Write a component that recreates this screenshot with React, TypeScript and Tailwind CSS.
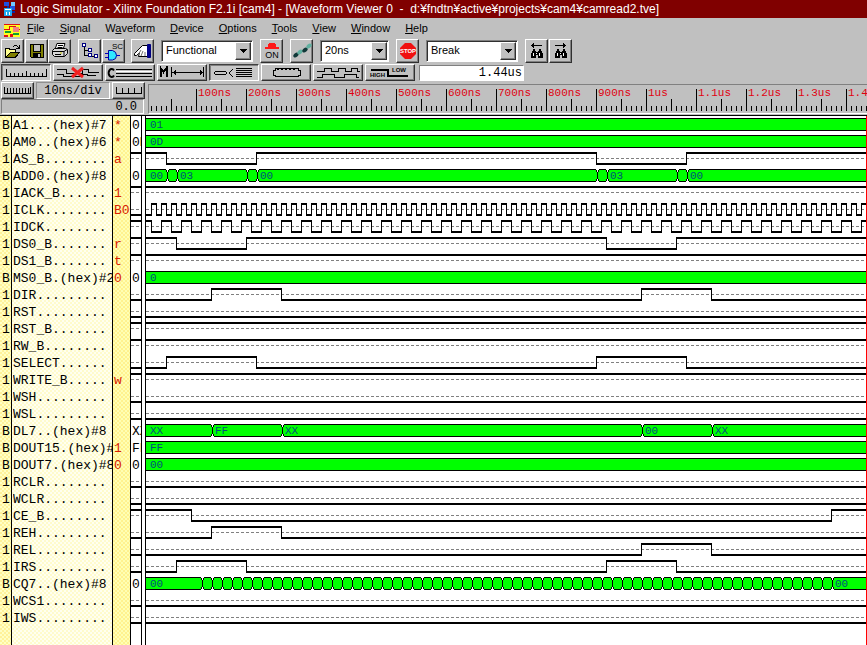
import React from "react";

type Signal = {
  name: string;
  tag?: string;
  value?: string;
  // digital line: starting level and the times (ns) at which it toggles
  high?: boolean;
  edges?: number[];
  // bus: labelled segments, plus unlabelled boundaries
  bus?: { at: number; text: string }[];
  cuts?: number[];
};

const every = (from: number, step: number, to: number) => {
  const out: number[] = [];
  for (let t = from; t <= to; t += step) out.push(t);
  return out;
};

const END = 6000;
const SIMULATED = 1440;

const SIGNALS: Signal[] = [
  { name: "A1...(hex)#7", tag: "*", value: "0", bus: [{ at: 0, text: "01" }] },
  { name: "AM0..(hex)#6", tag: "*", value: "0D", bus: [{ at: 0, text: "0D" }] },
  { name: "AS_B........", tag: "a", high: true, edges: [40, 220, 900, 1080] },
  {
    name: "ADD0.(hex)#8",
    value: "0",
    bus: [
      { at: 0, text: "00" },
      { at: 60, text: "03" },
      { at: 220, text: "00" },
      { at: 920, text: "03" },
      { at: 1080, text: "00" },
    ],
    cuts: [40, 60, 200, 220, 900, 920, 1060, 1080],
  },
  { name: "IACK_B......", tag: "1", high: true },
  { name: "ICLK........", tag: "B0", edges: every(10, 10, END) },
  { name: "IDCK........", high: true, edges: every(10, 20, END) },
  { name: "DS0_B.......", tag: "r", high: true, edges: [60, 200, 920, 1060] },
  { name: "DS1_B.......", tag: "t", high: true },
  { name: "MS0_B.(hex)#2", tag: "0", value: "0", bus: [{ at: 0, text: "0" }] },
  { name: "DIR.........", edges: [130, 270, 990, 1130] },
  { name: "RST........." },
  { name: "RST_B.......", high: true },
  { name: "RW_B........", high: true },
  { name: "SELECT......", edges: [40, 220, 900, 1080] },
  { name: "WRITE_B.....", tag: "w", high: true },
  { name: "WSH........." },
  { name: "WSL........." },
  {
    name: "DL7..(hex)#8",
    value: "XX",
    bus: [
      { at: 0, text: "XX" },
      { at: 130, text: "FF" },
      { at: 270, text: "XX" },
      { at: 990, text: "00" },
      { at: 1130, text: "XX" },
    ],
    cuts: [130, 270, 990, 1130],
  },
  { name: "DOUT15.(hex)#1", tag: "1", value: "FF", bus: [{ at: 0, text: "FF" }] },
  { name: "DOUT7.(hex)#8", tag: "0", value: "0", bus: [{ at: 0, text: "00" }] },
  { name: "RCLR........" },
  { name: "WCLR........" },
  { name: "CE_B........", high: true, edges: [90, 1370] },
  { name: "REH.........", edges: [130, 270] },
  { name: "REL.........", edges: [990, 1130] },
  { name: "IRS.........", edges: [60, 200, 920, 1060] },
  {
    name: "CQ7..(hex)#8",
    value: "0",
    bus: [
      { at: 0, text: "00" },
      { at: 1370, text: "00" },
    ],
    cuts: every(110, 20, 1370),
  },
  { name: "WCS1........" },
  { name: "IWS........." },
];

const px = (ns: number) => ns / 2;

function Wave({ s }: { s: Signal }) {
  if (s.bus) {
    return (
      <svg className="block h-[17px] w-full" shapeRendering="crispEdges" role="img" aria-label={s.name}>
        <rect x="0" y="2" width="100%" height="13" fill="#000" />
        <rect x="0" y="3" width="100%" height="11" fill="#00ff00" />
        {(s.cuts ?? []).map((t) => (
          <g key={t} transform={`translate(${px(t) + 1} 2)`}>
            <rect x="-1" y="0" width="3" height="1" fill="#fff" />
            <rect x="-1" y="12" width="3" height="1" fill="#fff" />
            <path d="M0 1h1v2h-1zM0 10h1v2h-1z" fill="#fff" />
            <path d="M-1 1h1v2h-1zM1 1h1v2h-1zM0 3h1v7h-1zM-1 10h1v2h-1zM1 10h1v2h-1z" fill="#000" />
          </g>
        ))}
        {s.bus.map((b) => (
          <text key={b.at} x={px(b.at) + 4} y="12" className="fill-[#00507c] font-['Liberation_Mono',monospace] text-[11px]">
            {b.text}
          </text>
        ))}
      </svg>
    );
  }
  const edges = s.edges ?? [];
  const points = [0, ...edges.map(px), px(END)];
  return (
    <svg className="block h-[17px] w-full" shapeRendering="crispEdges" role="img" aria-label={s.name}>
      <line x1="0" x2="100%" y1="8.5" y2="8.5" stroke="#808080" strokeDasharray="3 2" />
      {points.slice(0, -1).map((x, i) => {
        const up = i % 2 === 0 ? s.high : !s.high;
        return (
          <g key={x}>
            <rect x={x} y={up ? 2 : 13} width={points[i + 1] - x + 1} height="2" />
            {i > 0 && <rect x={x} y="2" width="1" height="13" />}
          </g>
        );
      })}
    </svg>
  );
}

const raised =
  "flex items-center justify-center border border-t-white border-l-white border-r-[#303030] border-b-[#303030] bg-[#c0c0c0] shadow-[inset_-1px_-1px_0_#808080]";
const pressed =
  "flex items-center justify-center border border-t-[#404040] border-l-[#404040] border-r-white border-b-white bg-[#c8c8c8] shadow-[inset_1px_1px_0_#808080]";

function Tool({ label, children }: { label: string; children: React.ReactNode }) {
  return (
    <button aria-label={label} className={`${raised} h-6 w-[23px] shrink-0`}>
      {children}
    </button>
  );
}

function Wide({ label, on, children }: { label: string; on?: boolean; children: React.ReactNode }) {
  return (
    <button aria-label={label} aria-pressed={!!on} className={`${on ? pressed : raised} h-[17px] w-[50px] shrink-0`}>
      <svg width="46" height="13" viewBox="0 0 46 13" fill="none" stroke="#000" shapeRendering="crispEdges">
        {children}
      </svg>
    </button>
  );
}

function Combo({ label, value, options, width }: { label: string; value: string; options: string[]; width: string }) {
  return (
    <div
      className={`relative h-[22px] shrink-0 border border-t-[#808080] border-l-[#808080] border-r-white border-b-white bg-white shadow-[inset_1px_1px_0_#303030] ${width}`}
    >
      <select aria-label={label} defaultValue={value} className="h-full w-full appearance-none bg-transparent pl-1 text-[11px] outline-none">
        {options.map((o) => (
          <option key={o}>{o}</option>
        ))}
      </select>
      <span className={`${raised} pointer-events-none absolute top-px right-px bottom-px w-4`}>
        <svg width="7" height="4" shapeRendering="crispEdges">
          <path d="M0 0h7v1h-7zM1 1h5v1h-5zM2 2h3v1h-3zM3 3h1v1h-1z" />
        </svg>
      </span>
    </div>
  );
}

const MENUS: [string, string, string][] = [
  ["", "F", "ile"],
  ["", "S", "ignal"],
  ["W", "a", "veform"],
  ["", "D", "evice"],
  ["", "O", "ptions"],
  ["", "T", "ools"],
  ["", "V", "iew"],
  ["", "W", "indow"],
  ["", "H", "elp"],
];

function Binoculars({ back }: { back?: boolean }) {
  return (
    <svg width="17" height="18" viewBox="0 0 17 18" shapeRendering="crispEdges">
      <path d={back ? "M3 3h11v1h-11zM4 2h1v3h-1zM5 1h1v5h-1z" : "M3 3h11v1h-11zM12 2h1v3h-1zM11 1h1v5h-1z"} />
      <path d="M5 7h2v2h1v1h2v-1h1v-2h2v2h1v2h1v5h-5v-3h-2v3h-5v-5h1v-2h1z" />
      <path d="M5 11h1v3h-1zM11 11h1v3h-1zM8 11h1v1h-1z" fill="#fff" />
    </svg>
  );
}

function Ruler() {
  return (
    <svg className="block h-[29px] w-full" shapeRendering="crispEdges" role="img" aria-label="Time scale">
      {every(10, 10, END).map((t) => {
        const h = t % 100 === 0 ? 22 : t % 50 === 0 ? 12 : 5;
        return <rect key={t} x={px(t) - 3} y={26 - h} width="1" height={h} />;
      })}
      {every(100, 100, SIMULATED).map((t) => (
        <text key={t} x={px(t) - 1} y="11" className="fill-[#e00010] font-['Liberation_Mono',monospace] text-[11px]">
          {t < 1000 ? `${t}ns` : `${t / 1000}us`}
        </text>
      ))}
    </svg>
  );
}

export default function App() {
  return (
    <div className="flex h-screen flex-col overflow-hidden bg-[#c0c0c0] font-['Liberation_Sans',Arial,sans-serif] text-[11px] text-black">
      <header className="flex h-[18px] shrink-0 items-center gap-[3px] bg-[#800000] pl-[2px] text-[12px] whitespace-pre text-white">
        <svg width="15" height="16" viewBox="0 0 15 16" shapeRendering="crispEdges" aria-hidden="true">
          <path d="M2 1h5v4h-5zM8 5h5v4h-5z" fill="#2050e0" />
          <path d="M9 1h4v4h-4z" fill="#70c8ff" />
          <path d="M2 7h8v8h-8z" fill="#20a8f0" />
          <path d="M3 8h6v1h-6zM4 11h1v3h-1zM7 11h1v3h-1z" fill="#fff" />
          <path d="M5 5h2v2h-2zM10 10h3v2h-3z" fill="#1028a0" />
        </svg>
        <h1>Logic Simulator - Xilinx Foundation F2.1i [cam4] - [Waveform Viewer 0{"  "}-{"  "}d:¥fndtn¥active¥projects¥cam4¥camread2.tve]</h1>
      </header>

      <nav className="flex h-5 shrink-0 items-center gap-[15px] pl-1">
        <svg width="16" height="13" viewBox="0 0 16 13" shapeRendering="crispEdges" className="-mr-2 mt-1" aria-hidden="true">
          <path d="M0 0h16v13h-16z" fill="#ffff20" />
          <path d="M0 0h16v1h-16zM0 5h5v1h-5zM5 2h1v4h-1zM6 2h5v1h-5zM11 2h1v4h-1zM12 5h4v1h-4z" fill="#e01010" />
          <path d="M9 3h6v5h-6z" fill="#f08080" />
          <path d="M1 7h6v2h-6zM9 9h6v2h-6z" fill="#10a030" />
          <path d="M0 11h4v2h-4zM6 10h3v3h-3z" fill="#e01010" />
        </svg>
        {MENUS.map(([a, b, c]) => (
          <button key={a + b + c}>
            {a}
            <span className="underline">{b}</span>
            {c}
          </button>
        ))}
      </nav>

      <div className="flex h-[25px] shrink-0 items-center pl-px">
        <Tool label="Open">
          <svg width="17" height="16" viewBox="0 0 17 16" shapeRendering="crispEdges">
            <path d="M1 5h4l1 1h6v3h4l-4 6h-11z" fill="#000" />
            <path d="M2 6h3v1h6v2h-5l-4 5z" fill="#ffff90" />
            <path d="M6 10h8l-3 4h-8z" fill="#808000" />
            <path d="M9 3h1v-1h3v1h1v1h1v-2h1v4h-4v-1h2v-1h-1v-1h-3v1h-1z" />
          </svg>
        </Tool>
        <div className="w-px" />
        <Tool label="Save">
          <svg width="16" height="16" viewBox="0 0 16 16" shapeRendering="crispEdges">
            <path d="M1 1h14v14h-13l-1-1z" />
            <path d="M2 2h2v7h8v-7h2v12h-2v-4h-8v4h-2z" fill="#808000" />
            <path d="M5 2h6v6h-6zM9 11h2v3h-2z" fill="#c0c0c0" />
          </svg>
        </Tool>
        <Tool label="Print">
          <svg width="18" height="17" viewBox="0 0 18 17" stroke="#000">
            <path d="M6 1.5h8l-2 6h-8z" fill="#fff" />
            <path d="M7 3.5h5M6.500 5.500h5" />
            <path d="M1.500 8.500l2-2h11l2 1v4l-3 3h-10l-2-2z" fill="#d8d8d8" />
            <path d="M2 9.500h11l3-2M13 9.500v5M4 12.500h6" fill="none" />
            <path d="M9 11h2" stroke="#c8c800" />
          </svg>
        </Tool>
        <div className="w-[7px]" />
        <Tool label="Hierarchy">
          <svg width="17" height="17" viewBox="0 0 17 17" fill="none" shapeRendering="crispEdges">
            <path d="M3.500 4v9.500h7M3.500 8.500h4M9.500 11v3.500h4" stroke="#000" />
            <path d="M1.500 1.500h3v3h-3zM7.500 6.500h3v3h-3zM7.500 11.500h3v3h-3zM13.500 12.500h3v3h-3z" fill="#fff" stroke="#000080" />
          </svg>
        </Tool>
        <div className="w-px" />
        <Tool label="Schematic">
          <svg width="20" height="20" viewBox="0 0 20 20">
            <text x="8" y="8" fontSize="8" className="font-['Liberation_Sans',sans-serif]">
              SC
            </text>
            <path d="M1 12.500h4M1 16.500h4M12 14.500h4" stroke="#0000c0" />
            <path d="M4.500 9.500h4q4 1 4 5t-4 4.500h-4z" fill="#30e8ff" stroke="#0000a0" />
          </svg>
        </Tool>
        <div className="w-[6px]" />
        <Tool label="Select signals">
          <svg width="19" height="16" viewBox="0 0 19 16" stroke="#000">
            <path d="M14.500 2.500h-5l-8 8v2h2l3-3 -1 4h9z" fill="#fff" />
            <path d="M8 7l-3 5M10 8l-2 5M12 9v4" fill="none" stroke="#707070" />
            <path d="M14.500 1.500h3v13h-3z" fill="#000090" stroke="#000080" />
          </svg>
        </Tool>
        <div className="w-[7px]" />
        <Combo label="Simulation mode" value="Functional" options={["Functional", "Glitch", "Unit", "Timing"]} width="w-[92px]" />
        <div className="w-[7px]" />
        <Tool label="Power on">
          <svg width="18" height="18" viewBox="0 0 18 18">
            <path d="M6 1h6v1h1v3h3v2h-14v-2h3v-3h1z" fill="#ff1818" shapeRendering="crispEdges" />
            <text x="9" y="16" textAnchor="middle" fontSize="9" className="font-['Liberation_Sans',sans-serif]">
              ON
            </text>
          </svg>
        </Tool>
        <div className="w-[7px]" />
        <Tool label="Step">
          <svg width="20" height="18" viewBox="0 0 20 18">
            <ellipse cx="4" cy="13" rx="3" ry="2" transform="rotate(-40 4 13)" fill="#103838" />
            <ellipse cx="8" cy="10" rx="3" ry="2" transform="rotate(-40 8 10)" fill="#60b0a0" />
            <ellipse cx="13" cy="8" rx="3" ry="2" transform="rotate(-40 13 8)" fill="#103838" />
            <ellipse cx="17" cy="4" rx="3" ry="2" transform="rotate(-40 17 4)" fill="#60b0a0" />
          </svg>
        </Tool>
        <div className="w-[7px]" />
        <Combo label="Step size" value="20ns" options={["10ns", "20ns", "100ns"]} width="w-[69px]" />
        <div className="w-[7px]" />
        <Tool label="Stop">
          <svg width="18" height="18" viewBox="0 0 18 18">
            <path d="M6 1h6l5 5v6l-5 5h-6l-5-5v-6z" fill="#f01010" />
            <text x="9" y="11" textAnchor="middle" fontSize="6" fontWeight="bold" fill="#fff" className="font-['Liberation_Sans',sans-serif]">
              STOP
            </text>
          </svg>
        </Tool>
        <div className="w-[7px]" />
        <Combo label="Breakpoint" value="Break" options={["Break", "Continue"]} width="w-[92px]" />
        <div className="w-[7px]" />
        <Tool label="Find previous">
          <Binoculars back />
        </Tool>
        <div className="w-px" />
        <Tool label="Find next">
          <Binoculars />
        </Tool>
      </div>

      <div className="flex h-[19px] shrink-0 items-center gap-[2px] pl-px">
        <Wide label="Ruler" on>
          <path d="M3.500 3v7.500h40v-7.500M7.500 10v-3M11.500 10v-3M15.500 10v-3M19.500 10v-3M23.500 10v-5M27.500 10v-3M31.500 10v-3M35.500 10v-3M39.500 10v-3" />
        </Wide>
        <Wide label="Delete waveform">
          <path d="M2 3.500h9v4h16v-4h6v3h11M2 8.500h6v2h18v-2h7M32 9.500h9" />
          <path d="M17 2l11 9M28 2l-11 9" stroke="#f02020" strokeWidth="3" shapeRendering="auto" />
        </Wide>
        <Wide label="Comment">
          <path d="M7 4.500a3 4 0 1 0 0 5" strokeWidth="2" shapeRendering="auto" />
          <path d="M9 3.500h36M9 7.500h36M9 10.500h36" />
          <path d="M9 5.500h36" stroke="#fff" />
        </Wide>
        <Wide label="Measure">
          <path d="M1.500 11v-9l3 4 3-4v9" strokeWidth="2" />
          <path d="M12.500 1v10M44.500 1v10M13 6.500h31M16 4v5M15 5v3M41 4v5M42 5v3" />
        </Wide>
        <Wide label="Collapse bus" on>
          <path d="M4 5.500h11M3.500 6v2M4 8.500h11M15.500 6v2" />
          <path d="M22 3l-4 4 4 4" shapeRendering="auto" />
          <path d="M25 2.500h16M25 4.500h16M25 6.500h16M25 8.500h16M25 10.500h16" />
        </Wide>
        <Wide label="Bus">
          <path d="M12.500 2.500h23v2h2v5h-2v1h-23v-1h-2v-5h2z" />
          <path d="M14 3.500h20M14 10.500h20" strokeDasharray="2 2" />
        </Wide>
        <Wide label="Clock waves">
          <path d="M2 5.500h7v-3h7v3h7v-3h7v3h6v-3h6v3h3M2 11.500h5v-3h12v3h10v-3h12v3h3" />
        </Wide>
        <Wide label="Low and high">
          <path d="M4 3.500h17v6h20" strokeWidth="2" />
          <text x="3" y="11" fontSize="6" fontWeight="bold" fill="#000" stroke="none" className="font-['Liberation_Sans',sans-serif]">
            HIGH
          </text>
          <text x="25" y="6" fontSize="6" fontWeight="bold" fill="#000" stroke="none" className="font-['Liberation_Sans',sans-serif]">
            LOW
          </text>
        </Wide>
        <input
          aria-label="Current time"
          defaultValue="1.44us"
          className="ml-[2px] h-4 w-[105px] border border-t-[#808080] border-l-[#808080] border-r-white border-b-white bg-white px-px text-right font-['Liberation_Mono',monospace] text-[12px]"
        />
      </div>

      <div className="flex h-[34px] shrink-0 border-b border-black">
        <div className="flex w-[146px] shrink-0 flex-col pb-px">
          <div className="flex h-[17px] justify-between gap-[2px] pr-px pl-px">
            <button aria-label="Zoom out" className={`${raised} w-[33px]`}>
              <svg width="27" height="8" fill="none" stroke="#000" shapeRendering="crispEdges">
                <path d="M.500 0v6.500h26v-6.500M3.500 1v5M6.500 1v5M9.500 1v5M12.500 1v5M15.500 1v5M18.500 1v5M21.500 1v5M24.500 1v5" />
              </svg>
            </button>
            <output className="flex flex-1 items-center justify-center border border-t-[#909090] border-l-[#909090] border-r-white border-b-white font-['Liberation_Mono',monospace] text-[12px]">
              10ns/div
            </output>
            <button aria-label="Zoom in" className={`${raised} w-[33px]`}>
              <svg width="26" height="8" fill="none" stroke="#000" shapeRendering="crispEdges">
                <path d="M.500 0v6.500h25v-6.500M6.500 1v5M12.500 1v5M18.500 1v5" />
              </svg>
            </button>
          </div>
          <output className="mr-[2px] ml-px flex flex-1 items-center justify-end border border-t-[#808080] border-l-[#808080] border-r-white border-b-white pt-px pr-[6px] font-['Liberation_Mono',monospace] text-[12px] leading-none">
            0.0
          </output>
        </div>
        <div className="mt-[2px] mb-px ml-[2px] min-w-0 flex-1 overflow-hidden border-t border-b border-l border-t-[#808080] border-b-white border-l-[#808080]">
          <Ruler />
        </div>
      </div>

      <main className="flex min-h-0 flex-1 bg-white">
        <div className="flex w-[146px] shrink-0 font-['Liberation_Mono',monospace] text-[13px] leading-[19px] whitespace-pre">
          <ul className="w-3 border-r border-black bg-[repeating-conic-gradient(#ffffc4_0_25%,#fff29a_0_50%)] bg-[length:4px_4px] pl-[2px]">
            {SIGNALS.map((s) => (
              <li key={s.name} className="h-[17px]">
                {s.bus ? "B" : "1"}
              </li>
            ))}
          </ul>
          <ul className="w-[101px] overflow-hidden border-r border-black bg-[repeating-conic-gradient(#fffff0_0_25%,#fffbcc_0_50%)] bg-[length:4px_4px] pl-px">
            {SIGNALS.map((s) => (
              <li key={s.name} className="h-[17px] overflow-hidden">
                {s.name}
              </li>
            ))}
          </ul>
          <ul className="w-[18px] overflow-hidden border-r border-black bg-[repeating-conic-gradient(#ffffb4_0_25%,#fff290_0_50%)] bg-[length:4px_4px] pl-px text-[#d82000]">
            {SIGNALS.map((s) => (
              <li key={s.name} className="h-[17px]">
                {s.tag}
              </li>
            ))}
          </ul>
          <ul className="w-[11px] overflow-hidden border-r border-black">
            {SIGNALS.map((s) => (
              <li key={s.name} className="h-[17px]">
                {s.bus ? <span className="pl-px">{s.value}</span> : <Wave s={{ name: s.name, high: s.high }} />}
              </li>
            ))}
          </ul>
          <div className="flex-1 border-r border-black" />
        </div>
        <div className="min-w-0 flex-1 overflow-hidden border-r border-[#ff0000]">
          {SIGNALS.map((s) => (
            <Wave key={s.name} s={s} />
          ))}
        </div>
      </main>
    </div>
  );
}
